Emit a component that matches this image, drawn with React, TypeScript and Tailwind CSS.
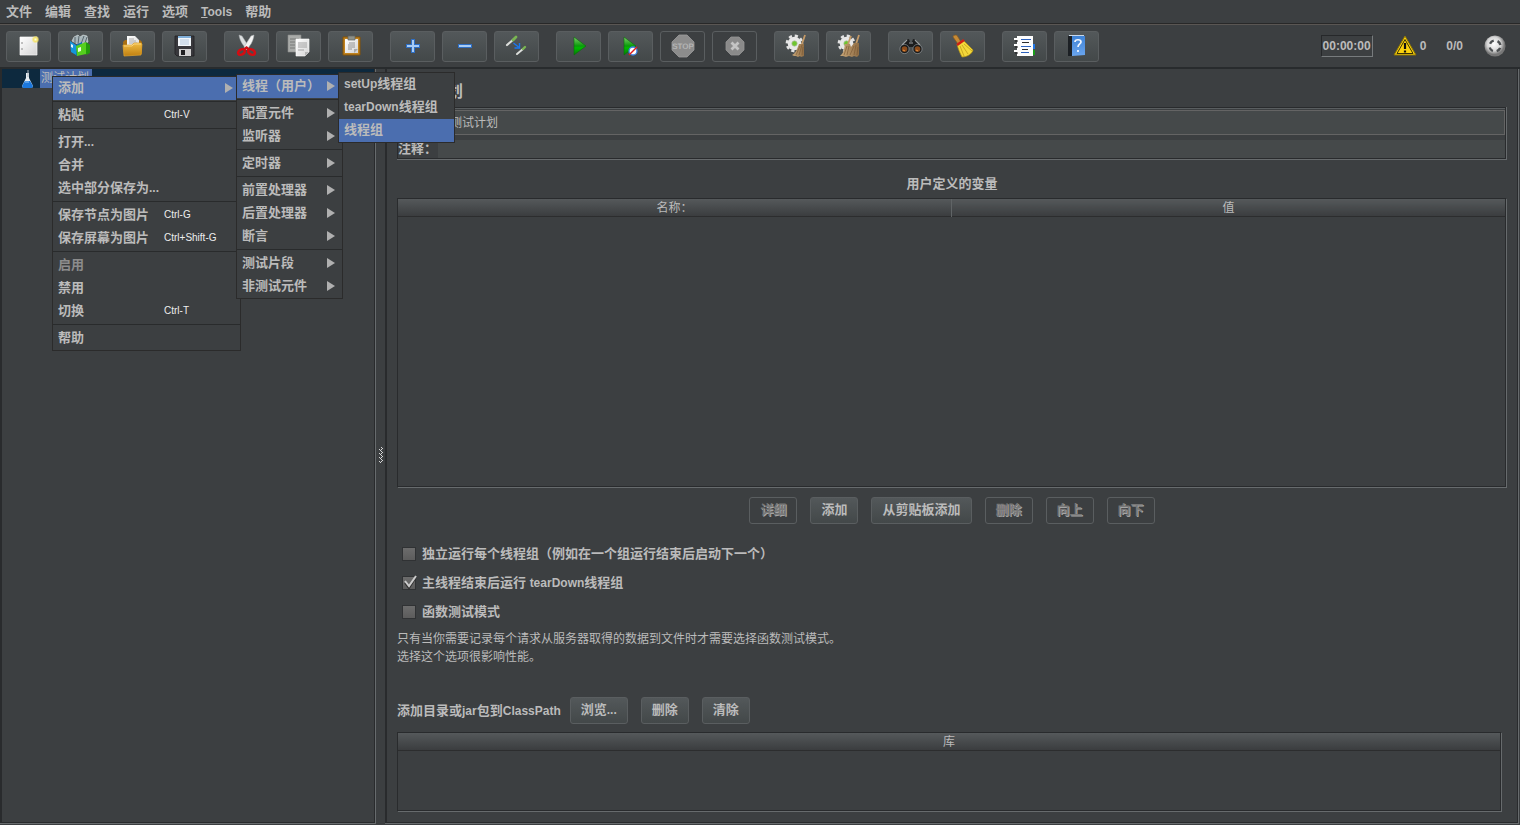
import type { ReactNode } from 'react';

type MenuEntry = {
  label: string;
  shortcut?: string;
  submenu?: boolean;
  active?: boolean;
  disabled?: boolean;
};

const menuBar = ['文件', '编辑', '查找', '运行', '选项', 'Tools', '帮助'];

const contextMenu: MenuEntry[][] = [
  [{ label: '添加', submenu: true, active: true }],
  [{ label: '粘贴', shortcut: 'Ctrl-V' }],
  [{ label: '打开...' }, { label: '合并' }, { label: '选中部分保存为...' }],
  [
    { label: '保存节点为图片', shortcut: 'Ctrl-G' },
    { label: '保存屏幕为图片', shortcut: 'Ctrl+Shift-G' },
  ],
  [{ label: '启用', disabled: true }, { label: '禁用' }, { label: '切换', shortcut: 'Ctrl-T' }],
  [{ label: '帮助' }],
];

const addMenu: MenuEntry[][] = [
  [{ label: '线程（用户）', submenu: true, active: true }],
  [
    { label: '配置元件', submenu: true },
    { label: '监听器', submenu: true },
  ],
  [{ label: '定时器', submenu: true }],
  [
    { label: '前置处理器', submenu: true },
    { label: '后置处理器', submenu: true },
    { label: '断言', submenu: true },
  ],
  [
    { label: '测试片段', submenu: true },
    { label: '非测试元件', submenu: true },
  ],
];

const threadMenu: MenuEntry[][] = [
  [{ label: 'setUp线程组' }, { label: 'tearDown线程组' }, { label: '线程组', active: true }],
];

const variableButtons = [
  { label: '详细', disabled: true },
  { label: '添加' },
  { label: '从剪贴板添加' },
  { label: '删除', disabled: true },
  { label: '向上', disabled: true },
  { label: '向下', disabled: true },
];

const options = [
  { id: 'serialized', label: '独立运行每个线程组（例如在一个组运行结束后启动下一个）', checked: false },
  { id: 'teardown', label: '主线程结束后运行 tearDown线程组', checked: true },
  { id: 'functional', label: '函数测试模式', checked: false },
];

// Latin runs are set one pixel smaller than the Chinese text around them
const Label = ({ text }: { text: string }) => (
  <>
    {text.split(/([A-Za-z.]+)/).map((part, i) =>
      i % 2 ? (
        <span key={i} className="text-[12px]">
          {part}
        </span>
      ) : (
        part
      ),
    )}
  </>
);

const Icon = ({ children }: { children: ReactNode }) => (
  <svg width="24" height="24" viewBox="0 0 24 24" fill="none" aria-hidden="true">
    {children}
  </svg>
);

const Gradients = () => (
  <svg width="0" height="0" className="absolute" aria-hidden="true">
    <defs>
      <linearGradient id="paper" x1="0" y1="0" x2="1" y2="1">
        <stop offset="0" stopColor="#ffffff" />
        <stop offset="1" stopColor="#d4d4d4" />
      </linearGradient>
      <linearGradient id="gold" x1="0" y1="0" x2="0" y2="1">
        <stop offset="0" stopColor="#f0bd45" />
        <stop offset="1" stopColor="#c07f10" />
      </linearGradient>
      <linearGradient id="play" x1="0" y1="0" x2="0" y2="1">
        <stop offset="0" stopColor="#7fce6c" />
        <stop offset="0.5" stopColor="#0a9a0a" />
        <stop offset="0.6" stopColor="#00bb00" />
        <stop offset="1" stopColor="#067a06" />
      </linearGradient>
      <radialGradient id="glow">
        <stop offset="0" stopColor="#fffde0" />
        <stop offset="0.5" stopColor="#f4e36a" />
        <stop offset="1" stopColor="#f4e36a" stopOpacity="0" />
      </radialGradient>
      <radialGradient id="ball" cx="0.45" cy="0.4">
        <stop offset="0" stopColor="#ffffff" />
        <stop offset="0.65" stopColor="#d6d6d6" />
        <stop offset="1" stopColor="#777777" />
      </radialGradient>
      <linearGradient id="straw" x1="0" y1="0" x2="1" y2="0">
        <stop offset="0" stopColor="#c9a778" />
        <stop offset="1" stopColor="#8f6d45" />
      </linearGradient>
      <linearGradient id="blue" x1="0" y1="0" x2="0" y2="1">
        <stop offset="0" stopColor="#3f83d6" />
        <stop offset="1" stopColor="#6aa5ee" />
      </linearGradient>
    </defs>
  </svg>
);

const NewIcon = () => (
  <Icon>
    <path d="M3 3h17v18H3z" fill="url(#paper)" stroke="#f8f8f8" strokeWidth="0.7" />
    <path d="M5 8v2M5 14v2" stroke="#888" />
    <circle cx="18.5" cy="5.5" r="4" fill="url(#glow)" />
  </Icon>
);

const TemplatesIcon = () => (
  <Icon>
    <path d="M3 7l2-4 4-2 2 2 3-2 4 1 1 6-7 4z" fill="#a7b5ba" stroke="#dce4e6" strokeWidth="0.6" />
    <path d="M6 3v6M10 2l-1 8M15 2l-3 8M18 3l-2 6" stroke="#5a676d" />
    <path d="M1 7l6 4v10l-5-3z" fill="#1595dc" />
    <path d="M7 11l6-3v11l-6 3z" fill="#0a6fb2" />
    <path d="M2 10l2 1v3l-2-1z" fill="#e3f4fd" />
    <path d="M7 12l10-4v12l-9 2z" fill="#55d01d" />
    <path d="M17 8l4 3v8l-4 2z" fill="#239b0c" />
    <path d="M9 14l3-1v4l-3 1z" fill="#e9fbe0" />
  </Icon>
);

const OpenIcon = () => (
  <Icon>
    <path d="M2 8l2-2h15l2 2v12H3z" fill="#a86f12" />
    <path d="M6 2h8l4 4v10H6z" fill="url(#paper)" />
    <path d="M8 5h5M8 7h7M8 9h8" stroke="#999" strokeWidth="0.8" />
    <path d="M2 11h9l2-2h7l1 1-1 11-17 1z" fill="url(#gold)" stroke="#dfa42c" strokeWidth="0.7" />
    <path d="M3 12h8l2-2h7" stroke="#ffe09a" strokeWidth="0.7" />
  </Icon>
);

const SaveIcon = () => (
  <Icon>
    <path d="M2 2h19v20H4l-2-2z" fill="#38383c" stroke="#202022" strokeWidth="0.8" />
    <path d="M5 2h13v10H5z" fill="#f2f6fa" />
    <path d="M5 2h13v2H5z" fill="#80afd9" />
    <path d="M7 6h9M7 8h9M7 10h9" stroke="#a4bed5" strokeWidth="0.8" />
    <path d="M6 15h12v7H6z" fill="#cfcfcf" />
    <path d="M8 16h4v5H8z" fill="#202022" />
  </Icon>
);

const CutIcon = () => (
  <Icon>
    <path d="M4 1l3 1 7 11-2 3C9 12 5 8 4 1z" fill="#dcdfe0" stroke="#a4a9ab" strokeWidth="0.5" />
    <path d="M19 1l-3 1-7 11 2 3c4-4 7-8 8-15z" fill="#f4f4f4" stroke="#b0b5b7" strokeWidth="0.5" />
    <ellipse cx="6.500" cy="18" rx="3.600" ry="2.500" transform="rotate(-30 6.500 18)" stroke="#d40d12" strokeWidth="2.600" />
    <ellipse cx="16.500" cy="18" rx="3.600" ry="2.500" transform="rotate(30 16.500 18)" stroke="#d40d12" strokeWidth="2.600" />
    <path d="M9 15.500l2.500-2 2.500 2" stroke="#d40d12" strokeWidth="2.400" />
  </Icon>
);

const CopyIcon = () => (
  <Icon>
    <path d="M1 1h13v17H1z" fill="#a9aba9" stroke="#8a8c8a" strokeWidth="0.6" />
    <path d="M3 5h9M3 8h5M3 11h5M3 14h5" stroke="#787a78" />
    <path d="M9 5h13v13l-4 4H9z" fill="url(#paper)" stroke="#fff" strokeWidth="0.6" />
    <path d="M11 9h9M11 11h9M11 13h9M11 16h6" stroke="#999" strokeWidth="0.9" />
    <path d="M18 22v-4h4z" fill="#b5b5b5" />
  </Icon>
);

const PasteIcon = () => (
  <Icon>
    <path d="M4 3h17v18H4z" fill="#c0821e" stroke="#855408" />
    <path d="M6 5h13v14H6z" fill="url(#paper)" />
    <path d="M9 2h7v4H9z" fill="#8c908a" stroke="#62655f" strokeWidth="0.7" />
    <path d="M10 9h6M9 11h7M9 13h7M9 15h4" stroke="#888" strokeWidth="0.9" />
    <path d="M15 19v-4h4z" fill="#aaa" />
  </Icon>
);

const PlusIcon = () => (
  <Icon>
    <path d="M12 5v14M5 12h14" stroke="#2f6fc4" strokeWidth="4" />
    <path d="M12 6v12M6 12h12" stroke="#a9ccf4" strokeWidth="2" />
  </Icon>
);

const MinusIcon = () => (
  <Icon>
    <path d="M5 12h14" stroke="#2f6fc4" strokeWidth="4" />
    <path d="M6 12h12" stroke="#a9ccf4" strokeWidth="2" />
  </Icon>
);

const ToggleIcon = () => (
  <Icon>
    <path d="M2 11l7-6" stroke="#dcdedb" strokeWidth="2.200" strokeLinecap="round" />
    <path d="M8 6l3-3" stroke="#79b552" strokeWidth="2.800" strokeLinecap="round" />
    <path d="M12 20l6-5" stroke="#dcdedb" strokeWidth="2" strokeLinecap="round" />
    <path d="M18 15l2-2" stroke="#79b552" strokeWidth="2.400" strokeLinecap="round" />
    <path d="M8.500 9l5 4M14.500 9v5h-5" stroke="#1c78ee" strokeWidth="1.400" />
  </Icon>
);

const StartIcon = () => (
  <Icon>
    <path d="M7 3l12 9-12 9z" fill="url(#play)" stroke="#0a6c0a" strokeWidth="0.6" />
  </Icon>
);

const StartNoPauseIcon = () => (
  <Icon>
    <path d="M5 3l12 9-12 9z" fill="url(#play)" stroke="#0a6c0a" strokeWidth="0.6" />
    <circle cx="14" cy="17" r="4" fill="#fff" stroke="#3c7fe0" strokeWidth="1.300" />
    <path d="M10 21l8-8" stroke="#e01818" strokeWidth="1.400" />
  </Icon>
);

const StopIcon = () => (
  <Icon>
    <path d="M8 1h8l7 7v8l-7 7H8l-7-7V8z" fill="#8c8c8c" stroke="#9c9c9c" strokeWidth="0.8" />
    <text x="12" y="15" textAnchor="middle" fill="#b4b4b4" fontSize="8" fontWeight="700" textRendering="geometricPrecision">
      STOP
    </text>
  </Icon>
);

const ShutdownIcon = () => (
  <Icon>
    <path d="M8 3h8l5 5v8l-5 5H8l-5-5V8z" fill="#8a8a8a" stroke="#969696" strokeWidth="0.8" />
    <path d="M8.500 8.500l7 7M15.500 8.500l-7 7" stroke="#c4c4c4" strokeWidth="2.800" />
  </Icon>
);

const Gear = () => (
  <>
    <circle cx="9.500" cy="9.500" r="7.600" stroke="#e4e4e4" strokeWidth="2.600" strokeDasharray="3.200 2.770" />
    <circle cx="9.500" cy="9.500" r="6.800" fill="#e8e8e8" />
    <circle cx="9.500" cy="9.500" r="2.700" fill="#6fc52e" stroke="#b6bfae" strokeWidth="0.7" />
  </>
);

const ClearIcon = () => (
  <Icon>
    <Gear />
    <path d="M20 1l-3 9" stroke="#c49a68" strokeWidth="1.800" />
    <path d="M14 10l5 0 0 12-3 1-1-1-2 1-2-1-2 0-2-1c4-2 5-6 7-11z" fill="url(#straw)" />
    <path d="M15 12l-4 9M17 11l-3 10M18 13l-1 8" stroke="#775632" strokeWidth="0.6" />
  </Icon>
);

const ClearAllIcon = () => (
  <Icon>
    <Gear />
    <path d="M14 2l-3 8M22 1l-3 9" stroke="#c49a68" strokeWidth="1.800" />
    <path d="M8 10l5 0 1 3 3-4h5l0 12-2 2-3-1-2 1-3-1-3 1-3-1-3 0c4-3 4-7 5-12z" fill="url(#straw)" />
    <path d="M10 12l-3 9M12 12l-2 9M17 12l-4 9M19 11l-2 10M21 13l-1 8" stroke="#775632" strokeWidth="0.6" />
  </Icon>
);

const SearchIcon = () => (
  <Icon>
    <path d="M2 13l5-7 3-1 1 3h2l1-3 3 1 5 7-2 4-6-4h-4l-6 4z" fill="#1c1d1e" />
    <path d="M3 11l5-5M21 11l-5-5M10 9h4" stroke="#9b9fa1" strokeWidth="1.100" />
    <circle cx="5.500" cy="15" r="3.600" fill="#8a4a1a" stroke="#15181a" strokeWidth="1.500" />
    <circle cx="18.500" cy="15" r="3.600" fill="#8a4a1a" stroke="#15181a" strokeWidth="1.500" />
    <circle cx="5.500" cy="15" r="4.600" stroke="#9b9fa1" strokeWidth="0.600" />
    <circle cx="18.500" cy="15" r="4.600" stroke="#9b9fa1" strokeWidth="0.600" />
    <path d="M4 16l2 1M17 16l2 1" stroke="#e08a3c" strokeWidth="1.300" />
  </Icon>
);

const BroomIcon = () => (
  <Icon>
    <path d="M2 3c0-2 4-3 5 0l3 5-3 2z" fill="#c68a36" stroke="#875a1c" strokeWidth="0.7" />
    <path d="M6 10l6-4 3 3 7 7c-1 4-6 7-11 7-2-4-4-8-5-13z" fill="#f3d83a" stroke="#b49411" strokeWidth="0.7" />
    <path d="M9 12l4 10M11 11l6 9M13 10l8 7" stroke="#c5a51d" strokeWidth="0.9" />
    <path d="M6 11l7-5" stroke="#cf1f14" strokeWidth="2.600" />
  </Icon>
);

const FunctionIcon = () => (
  <Icon>
    <path d="M17 10h5v5h-5z" fill="#2277e6" />
    <path d="M17 16h5v5h-5z" fill="#1a9c1a" />
    <path d="M4 2h16v20H4z" fill="#fdfdfd" />
    <path d="M1 5h4M1 11h4M1 17h4" stroke="#fff" strokeWidth="2.200" />
    <path d="M2 7h3M2 13h3M2 19h3" stroke="#1c1c1c" />
    <path d="M8 5.500h10M8 12.500h10M8 18.500h8" stroke="#2d62bd" />
    <path d="M9 8.500h7M9 15.500h6" stroke="#2c2c2c" />
  </Icon>
);

const HelpIcon = () => (
  <Icon>
    <path d="M3 2h4v20H3z" fill="#1c2024" />
    <path d="M7 2h13v19l-13 1z" fill="url(#blue)" />
    <path d="M4 1.500h15" stroke="#c8d8ea" />
    <path d="M10 8c0-3 6-3 6 0 0 2-3 2-3 5M13 16v2" stroke="#f2f7ff" strokeWidth="1.700" />
  </Icon>
);

const toolbarGroups = [
  [
    { name: '新建', icon: <NewIcon /> },
    { name: '模板', icon: <TemplatesIcon /> },
    { name: '打开', icon: <OpenIcon /> },
    { name: '保存', icon: <SaveIcon /> },
  ],
  [
    { name: '剪切', icon: <CutIcon /> },
    { name: '复制', icon: <CopyIcon /> },
    { name: '粘贴', icon: <PasteIcon /> },
  ],
  [
    { name: '展开', icon: <PlusIcon /> },
    { name: '折叠', icon: <MinusIcon /> },
    { name: '切换', icon: <ToggleIcon /> },
  ],
  [
    { name: '启动', icon: <StartIcon /> },
    { name: '不停顿启动', icon: <StartNoPauseIcon /> },
    { name: '停止', icon: <StopIcon />, disabled: true },
    { name: '关闭', icon: <ShutdownIcon />, disabled: true },
  ],
  [
    { name: '清除', icon: <ClearIcon /> },
    { name: '清除全部', icon: <ClearAllIcon /> },
  ],
  [
    { name: '查找', icon: <SearchIcon /> },
    { name: '重置查找', icon: <BroomIcon /> },
  ],
  [
    { name: '函数助手', icon: <FunctionIcon /> },
    { name: '帮助', icon: <HelpIcon /> },
  ],
];

const Toolbar = () => (
  <div className="flex h-[42px] items-center gap-[17px] pr-[14px] pl-[6px]">
    {toolbarGroups.map((group, i) => (
      <div key={i} className="flex gap-[7px]">
        {group.map(({ name, icon, disabled }: { name: string; icon: ReactNode; disabled?: boolean }) => (
          <button
            key={name}
            type="button"
            aria-label={name}
            disabled={disabled}
            className="flex h-[31px] w-[45px] items-center justify-center rounded-[3px] border border-[#5a5e60] bg-linear-to-b from-[#53585a] to-[#434849] disabled:bg-none"
          >
            {icon}
          </button>
        ))}
      </div>
    ))}
    <div className="ml-auto flex items-center text-[12px] font-bold">
      <span className="border border-t-[#26282a] border-r-[#777b7d] border-b-[#777b7d] border-l-[#26282a] px-px leading-[20px]">
        00:00:00
      </span>
      <svg width="24" height="24" viewBox="0 0 24 24" fill="none" className="ml-5" aria-hidden="true">
        <path d="M12 2l11 19H1z" fill="#fbd20c" stroke="#8a7306" strokeLinejoin="round" />
        <path d="M12 5.500l8 14H4z" stroke="#3a3206" />
        <path d="M12 9v6M12 16.500v2" stroke="#111" strokeWidth="2.200" />
      </svg>
      <span className="ml-[3px]">0</span>
      <span className="ml-5">0/0</span>
      <svg width="22" height="22" viewBox="0 0 22 22" fill="none" className="ml-[21px]" aria-hidden="true">
        <circle cx="11" cy="11" r="10.500" fill="url(#ball)" />
        <circle cx="11" cy="11" r="5.500" stroke="#4b4e50" strokeWidth="2.400" strokeDasharray="4.640 4" strokeDashoffset="-2" />
      </svg>
    </div>
  </div>
);

const PopupMenu = ({ groups, className }: { groups: MenuEntry[][]; className: string }) => (
  <div role="menu" className={`absolute border border-[#2b2b2b] bg-[#3c3f41] text-[13px] font-bold ${className}`}>
    {groups.map((group, i) => (
      <div key={i}>
        {i > 0 && <div className="mt-px mb-[2px] h-px bg-[#292b2c]" />}
        {group.map((item) => (
          <button
            key={item.label}
            type="button"
            role="menuitem"
            disabled={item.disabled}
            className={`flex h-[23px] w-full items-center pr-[7px] pb-[2px] pl-[5px] text-left whitespace-nowrap disabled:text-[#8c8c8c] ${item.active ? 'bg-[#4b6eaf]' : ''}`}
          >
            <span className={item.shortcut ? 'w-[106px]' : ''}>
              <Label text={item.label} />
            </span>
            {item.shortcut && <span className="text-[10px] font-normal text-[#eeeeee]">{item.shortcut}</span>}
            {item.submenu && (
              <svg width="8" height="10" viewBox="0 0 8 10" className="ml-auto" aria-hidden="true">
                <path d="M0 0l8 5-8 5z" fill="#b0b0b0" />
              </svg>
            )}
          </button>
        ))}
      </div>
    ))}
  </div>
);

const PushButton = ({ label, disabled }: { label: string; disabled?: boolean }) => (
  <button
    type="button"
    disabled={disabled}
    className="h-[27px] rounded-[3px] border border-[#5a5e60] bg-linear-to-b from-[#53585a] to-[#434849] px-[10px] pb-px text-[13px] leading-[20px] font-bold disabled:bg-none disabled:text-[#777777] disabled:[text-shadow:1px_1px_0_#a4a4a4]"
  >
    <Label text={label} />
  </button>
);

const DataTable = ({ columns, className }: { columns: string[]; className: string }) => (
  <div className={`border border-[#292b2d] shadow-[1px_1px_0_#676b6d] ${className}`}>
    <table className="w-full table-fixed border-collapse">
      <thead>
        <tr className="border-b border-[#2c2d2e] bg-linear-to-b from-[#55595b] to-[#3b3d3f]">
          {columns.map((column) => (
            <th
              key={column}
              className="border-l border-[#606466] p-0 pt-[2px] text-[12px] leading-[15px] font-normal first:border-l-0"
            >
              {column}
            </th>
          ))}
        </tr>
      </thead>
    </table>
  </div>
);

const TreePanel = () => (
  <aside className="mb-px w-[376px] shrink-0 border-r border-b border-[#676b6d]">
    <div className="h-full border-r border-b border-l-2 border-[#292b2d]">
      <div className="flex h-[19px] items-center bg-[#0d293e] pl-[18px]">
        <svg width="15" height="18" viewBox="0 0 15 18" fill="none" aria-hidden="true">
          <path d="M6 3h3v5l4 8-1 2H3l-1-2 4-8z" fill="#e6edf3" />
          <path d="M5 11h5l3 5-1 2H3l-1-2z" fill="#1c78dc" />
          <path d="M5 12h4" stroke="#8cc4fa" />
          <path d="M8 0v7" stroke="#aab2b8" />
        </svg>
        <span className="ml-[5px] bg-[#4b6eaf] pr-[3px] pl-px text-[12px] leading-[19px]">测试计划</span>
      </div>
    </div>
  </aside>
);

const Divider = () => (
  <div className="flex w-[9px] shrink-0 items-center justify-center pt-4">
    <svg width="4" height="16" viewBox="0 0 4 16" aria-hidden="true" shapeRendering="crispEdges">
      {[0, 4, 8, 12].map((y) => (
        <path key={y} d={`M2 ${y}h1v1h-1zM3 ${y + 1}h1v1h-1zM0 ${y + 2}h1v1h-1zM1 ${y + 3}h1v1h-1zM2 ${y + 2}h1v1h-1z`} fill="#d5d5d5" />
      ))}
    </svg>
  </div>
);

const TestPlanForm = () => (
  <main className="mr-px mb-px flex min-w-0 flex-1 border-r border-b border-[#676b6d]">
    <div className="flex min-w-0 flex-1 flex-col border-r border-b border-l-2 border-[#292b2d] px-[10px] pt-[11px] pb-[11px]">
      <h1 className="mb-[3px] pl-[2px] text-[16px] leading-[24px] font-bold">测试计划</h1>

      <div className="border-r border-b border-[#676b6d]">
        <div className="border border-[#292b2d] text-[13px] font-bold">
          <div className="flex items-center border-t border-[#5a5e60] pt-px">
            <label htmlFor="plan-name" className="w-10 shrink-0">
              名称：
            </label>
            <input
              id="plan-name"
              defaultValue="测试计划"
              className="h-[25px] min-w-0 flex-1 border border-[#646464] bg-[#45494a] px-[11px] pb-[2px] text-[12px] font-normal"
            />
          </div>
          <div className="mt-[5px] flex items-center">
            <label htmlFor="plan-comments" className="w-10 shrink-0 leading-[18px]">
              注释：
            </label>
            <input id="plan-comments" className="h-[18px] min-w-0 flex-1 bg-[#45494a] px-[11px] text-[12px] font-normal" />
          </div>
        </div>
      </div>

      <h2 className="mt-[14px] mb-1 text-center text-[13px] leading-[20px] font-bold">用户定义的变量</h2>
      <DataTable columns={['名称：', '值']} className="mr-px min-h-[80px] flex-1" />

      <div className="mt-[10px] flex justify-center gap-[13px]">
        {variableButtons.map((button) => (
          <PushButton key={button.label} {...button} />
        ))}
      </div>

      <div className="mt-[15px] pl-[5px]">
        {options.map((option) => (
          <div key={option.id} className="flex h-[29px] items-center">
            <div className="relative flex">
              <input
                id={option.id}
                type="checkbox"
                defaultChecked={option.checked}
                className="peer size-[14px] appearance-none border border-[#303234] bg-linear-to-b from-[#6c6c6c] to-[#5c5c5c]"
              />
              <svg
                width="16"
                height="16"
                viewBox="0 0 16 16"
                fill="none"
                className="pointer-events-none absolute -top-px left-0 hidden peer-checked:block"
                aria-hidden="true"
              >
                <path d="M3 8l4 5 7-11" stroke="#303030" strokeWidth="2" />
                <path d="M3 6l4 5 7-10" stroke="#cccccc" strokeWidth="2" />
              </svg>
            </div>
            <label htmlFor={option.id} className="pl-[6px] text-[13px] font-bold">
              <Label text={option.label} />
            </label>
          </div>
        ))}
      </div>
      <p className="mt-1 text-[12px] leading-[18px]">
        只有当你需要记录每个请求从服务器取得的数据到文件时才需要选择函数测试模式。
        <br />
        选择这个选项很影响性能。
      </p>

      <div className="mt-[31px] mb-2 flex items-center gap-[13px]">
        <span className="-mr-1 text-[13px] font-bold">
          <Label text="添加目录或jar包到ClassPath" />
        </span>
        <PushButton label="浏览..." />
        <PushButton label="删除" />
        <PushButton label="清除" />
      </div>
      <DataTable columns={['库']} className="mr-[6px] h-[79px]" />
    </div>
  </main>
);

const App = () => (
  <div className="relative flex h-screen min-h-[640px] flex-col overflow-hidden bg-[#3c3f41] font-['Liberation_Sans','Noto_Sans_CJK_SC',sans-serif] text-[#bbbbbb]">
    <Gradients />
    <nav className="flex h-[24px] items-center gap-[13px] border-b border-[#282828] pl-[6px] text-[13px] leading-[22px] font-bold">
      {menuBar.map((item) => (
        <button key={item} type="button">
          {item === 'Tools' ? (
            <span className="text-[12px]">
              <u>T</u>ools
            </span>
          ) : (
            item
          )}
        </button>
      ))}
    </nav>
    <div className="border-t border-b-2 border-t-[#5a5653] border-b-[#282b2d]">
      <Toolbar />
    </div>
    <div className="flex min-h-0 flex-1">
      <TreePanel />
      <Divider />
      <TestPlanForm />
    </div>
    <PopupMenu groups={contextMenu} className="top-[76px] left-[52px] w-[189px]" />
    <PopupMenu groups={addMenu} className="top-[74px] left-[236px] w-[107px]" />
    <PopupMenu groups={threadMenu} className="top-[72px] left-[338px] w-[117px]" />
  </div>
);

export default App;
